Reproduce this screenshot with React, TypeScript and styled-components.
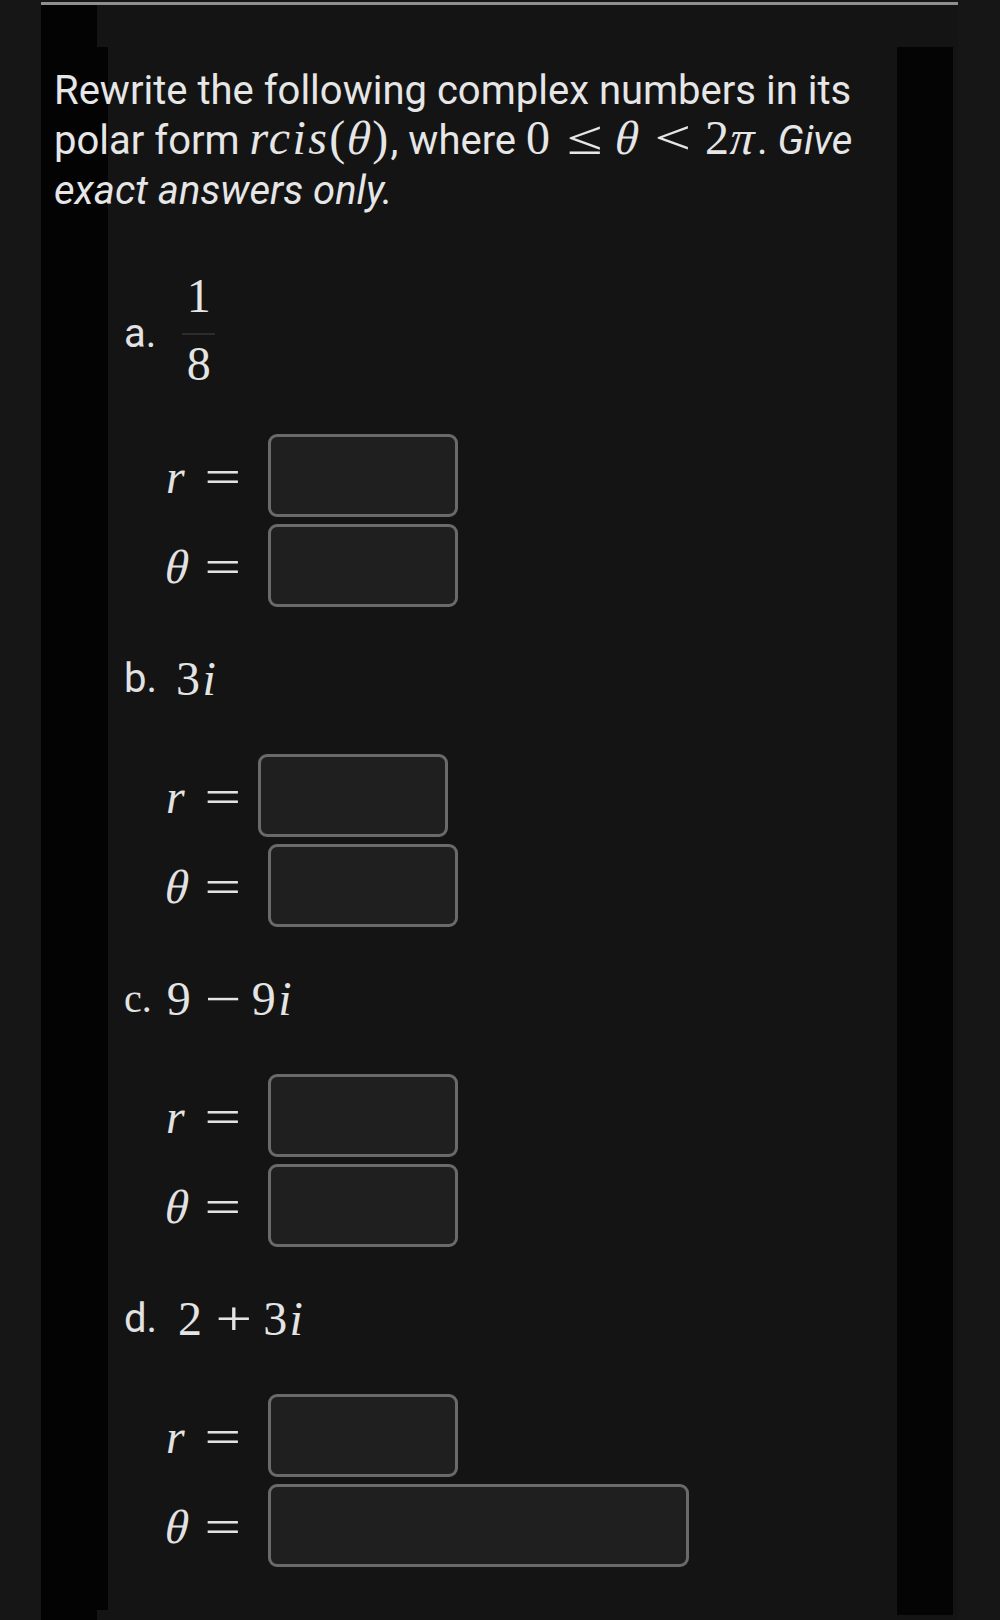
import styled, { createGlobalStyle } from "styled-components";

const GlobalStyle = createGlobalStyle`
  html, body {
    margin: 0;
    padding: 0;
    background: #161616;
    overflow: hidden;
  }
  body {
    font-family: Roboto, "Noto Sans", sans-serif;
    color: #e4e4e4;
  }
`;

type Part = {
  label: string;
  serifLabel?: boolean;
  gap: number;
  expr: React.ReactNode;
  tall?: boolean;
  rGap?: number;
  thetaWidth?: number;
};

function getParts(): Part[] {
  return [
    {
      label: "a.",
      gap: 26,
      tall: true,
      expr: (
        <Frac>
          <FracNum>1</FracNum>
          <FracBar />
          <FracDen>8</FracDen>
        </Frac>
      ),
    },
    {
      label: "b.",
      gap: 19,
      rGap: 17,
      expr: (
        <Tex>
          3<Var>i</Var>
        </Tex>
      ),
    },
    {
      label: "c.",
      serifLabel: true,
      gap: 15,
      expr: (
        <Tex>
          9<Op>−</Op>9<Var>i</Var>
        </Tex>
      ),
    },
    {
      label: "d.",
      gap: 21,
      thetaWidth: 421,
      expr: (
        <Tex>
          2<Op>+</Op>3<Var>i</Var>
        </Tex>
      ),
    },
  ];
}

function App() {
  const parts = getParts();
  return (
    <>
      <GlobalStyle />
      <Frame>
        <Question>
          Rewrite the following complex numbers in its
          <br />
          polar form{" "}
          <Tex $inline>
            <Var>rcis</Var>(<Greek>θ</Greek>)
          </Tex>
          , where{" "}
          <Tex $inline>
            0<Op $space={0.278}>≤</Op>
            <Greek>θ</Greek>
            <Op $space={0.278}>&lt;</Op>2<Greek>π</Greek>
          </Tex>
          . <em>Give</em>
          <br />
          <em>exact answers only.</em>
        </Question>

        <Items>
          {parts.map(p => (
            <Item key={p.label}>
              <ItemHead $gap={p.gap}>
                <ItemLabel $serif={p.serifLabel}>{p.label}</ItemLabel>
                {p.expr}
              </ItemHead>
              <Answers $top={p.tall ? 39 : 51}>
                <AnswerRow $gap={p.rGap ?? 27}>
                  <Lhs>
                    <LhsVar>r</LhsVar>
                    <Op $space={0}>=</Op>
                  </Lhs>
                  <AnswerBox aria-label="r" />
                </AnswerRow>
                <AnswerRow $gap={27}>
                  <Lhs>
                    <LhsVar>
                      <Greek>θ</Greek>
                    </LhsVar>
                    <Op $space={0}>=</Op>
                  </Lhs>
                  <AnswerBox aria-label="theta" $w={p.thetaWidth} />
                </AnswerRow>
              </Answers>
            </Item>
          ))}
        </Items>
      </Frame>
    </>
  );
}

export default App;

const Frame = styled.main`
  box-sizing: border-box;
  width: 917px;
  min-height: 1618px;
  margin: 2px 0 0 41px;
  padding-top: 61px;
  border-top: 3px solid #8f8f8f;
  background:
    linear-gradient(#030303, #030303) 0 0 / 56px 100% no-repeat,
    linear-gradient(#030303, #030303) 56px 42px / 11px 1563px no-repeat,
    linear-gradient(#040404, #040404) 856px 42px / 56px 1568px no-repeat,
    #141414;
`;

const Question = styled.p`
  margin: 0 0 0 13px;
  font-size: 40px;
  line-height: 50px;
  white-space: nowrap;
  color: #e6e6e6;

  em {
    font-style: italic;
  }
`;

const Tex = styled.span<{ $inline?: boolean }>`
  font-family: "Liberation Serif", "DejaVu Serif", serif;
  font-size: 48px;
  line-height: ${props => (props.$inline ? "40px" : "48px")};
  letter-spacing: 0.05em;
  white-space: nowrap;
`;

const Var = styled.i`
  font-style: italic;
`;

const Greek = styled.i`
  display: inline-block;
  font-style: normal;
  letter-spacing: 0.03em;
  transform: skewX(-13deg);
`;

const Op = styled.span<{ $space?: number }>`
  display: inline-block;
  width: 0.778em;
  margin: 0 ${props => props.$space ?? 0.222}em;
  text-align: center;
  font-style: normal;
  letter-spacing: 0;
  transform: scaleX(1.35);
`;

const Items = styled.div`
  display: flex;
  flex-direction: column;
  gap: 48px;
  margin-top: 56px;
  padding-left: 83px;
`;

const Item = styled.section`
  display: flex;
  flex-direction: column;
`;

const ItemHead = styled.div<{ $gap: number }>`
  display: flex;
  align-items: center;
  gap: ${props => props.$gap}px;
  font-size: 40px;
  line-height: 48px;
`;

const ItemLabel = styled.span<{ $serif?: boolean }>`
  font-family: ${props =>
    props.$serif ? `"Liberation Serif", serif` : `Roboto, sans-serif`};
  color: #e2e2e2;
`;

const Frac = styled.span`
  display: inline-flex;
  flex-direction: column;
  align-items: center;
  padding-bottom: 12px;
  font-family: "Liberation Serif", "DejaVu Serif", serif;
  font-size: 48px;
`;

const FracNum = styled.span`
  line-height: 48px;
`;

const FracBar = styled.span`
  width: 33px;
  height: 2px;
  margin-top: 13px;
  background: #2c2c2c;
`;

const FracDen = styled.span`
  line-height: 38px;
  margin-top: 10px;
`;

const Answers = styled.div<{ $top: number }>`
  display: flex;
  flex-direction: column;
  gap: 7px;
  margin-top: ${props => props.$top}px;
  padding-left: 42px;
`;

const AnswerRow = styled.div<{ $gap: number }>`
  display: flex;
  align-items: center;
  gap: ${props => props.$gap}px;
`;

const Lhs = styled.span`
  display: flex;
  align-items: baseline;
  padding-top: 2px;
  font-family: "Liberation Serif", "DejaVu Serif", serif;
  font-size: 48px;
  line-height: 48px;
  color: #e2e2e2;
`;

const LhsVar = styled.i`
  width: 38px;
  font-style: italic;
`;

const AnswerBox = styled.input<{ $w?: number }>`
  box-sizing: border-box;
  width: ${props => props.$w ?? 190}px;
  height: 83px;
  padding: 0 14px;
  border: 3px solid #6a6a6a;
  border-radius: 9px;
  background: #1f1f1f;
  color: #eeeeee;
  font-family: Roboto, sans-serif;
  font-size: 30px;
  outline: none;
`;
